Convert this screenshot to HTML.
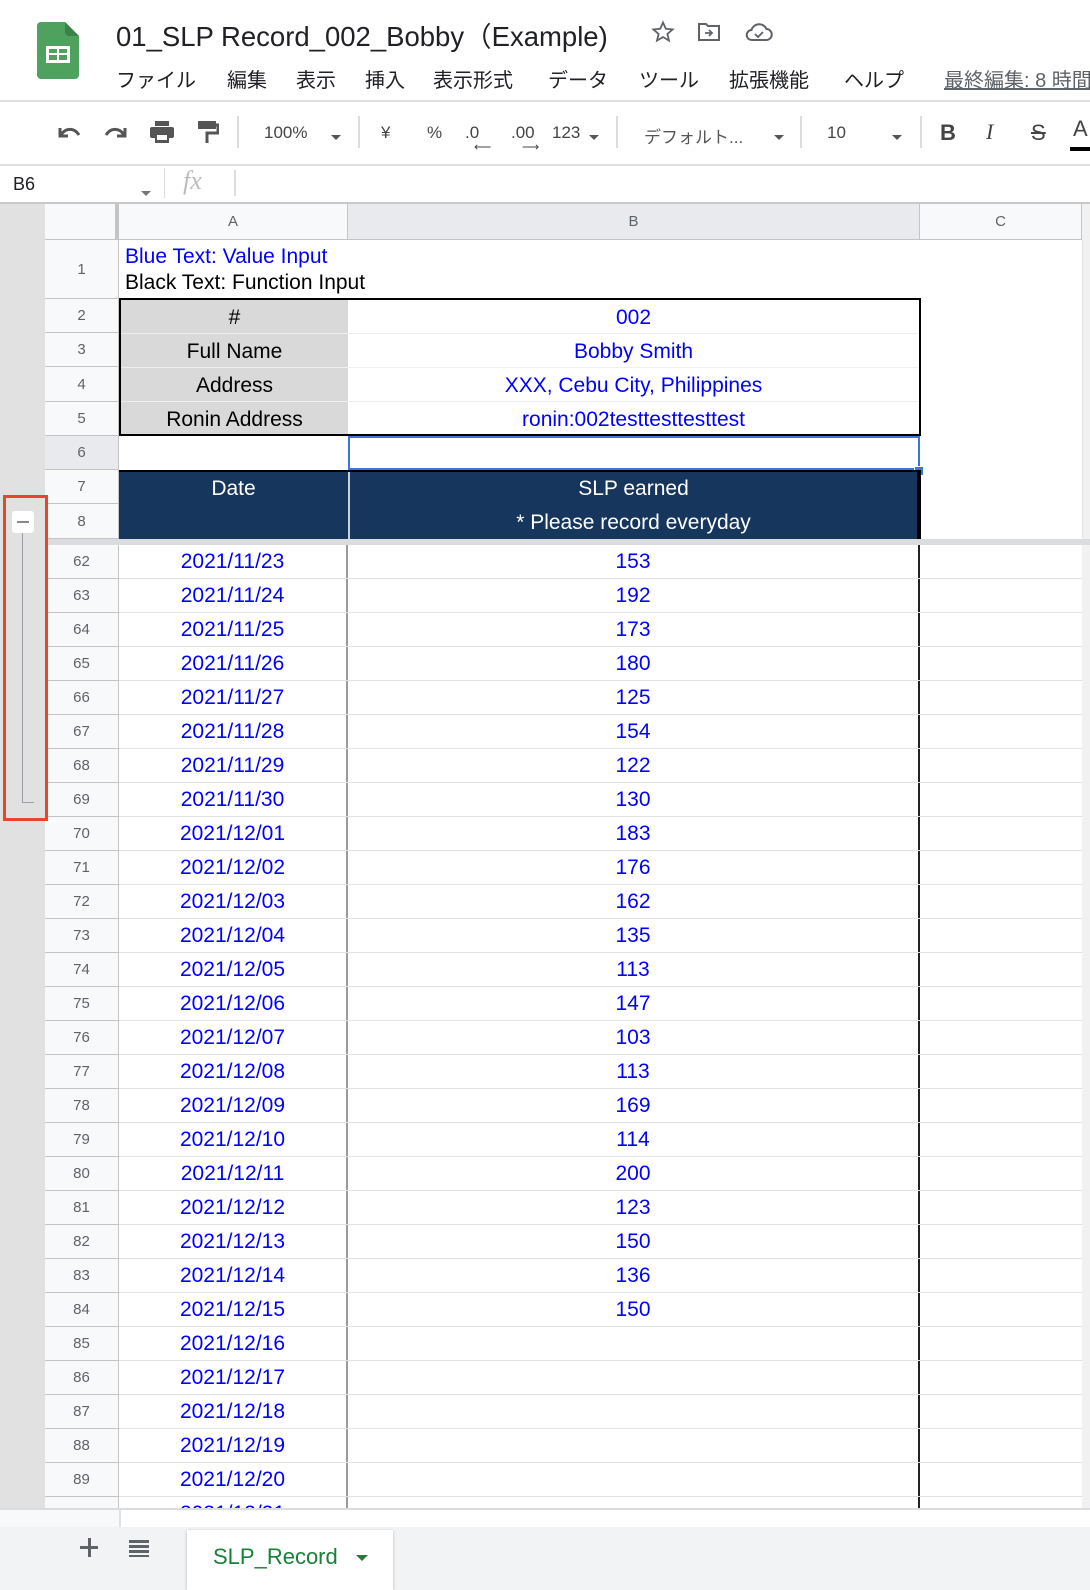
<!DOCTYPE html>
<html><head><meta charset="utf-8">
<style>
*{margin:0;padding:0;box-sizing:border-box}
body{width:1090px;height:1590px;position:relative;overflow:hidden;background:#fff;font-family:"Liberation Sans","Noto Sans CJK JP",sans-serif}
.abs{position:absolute}
.menu span{position:absolute;top:64px;font-size:20px;color:#202124;white-space:nowrap}
.tb{position:absolute;top:123px;font-size:17px;color:#444;white-space:nowrap}
.sep{position:absolute;top:116px;width:2px;height:32px;background:#dadce0}
.rn{position:absolute;left:45px;width:74px;text-align:center;font-size:15px;color:#5f6368;background:#f8f9fa;border-bottom:1px solid #c4c4c4;border-right:1px solid #c4c4c4}
.r{position:absolute;left:119px;width:801px;height:34px;border-bottom:1px solid #e2e2e2}
.r .a{position:absolute;left:0;width:229px;height:33px;line-height:34px;text-align:center;color:#0000ff;font-size:21px;border-right:2px solid #9a9a9a}
.r .b{position:absolute;left:229px;width:572px;height:33px;line-height:34px;text-align:center;color:#0000ff;font-size:21px;border-right:2px solid #222}
.tri{display:inline-block;width:0;height:0;border-left:5px solid transparent;border-right:5px solid transparent;border-top:5px solid #555}
.hc{position:absolute;text-align:center;font-size:21px;height:33px;line-height:33px}
</style></head><body>
<svg class="abs" style="left:37px;top:22px" width="42" height="57" viewBox="0 0 42 57"><path d="M4 0h24l14 14v39a4 4 0 0 1-4 4H4a4 4 0 0 1-4-4V4a4 4 0 0 1 4-4z" fill="#4ea25e"/><path d="M28 0l14 14H32a4 4 0 0 1-4-4z" fill="#3b8249"/><rect x="9" y="24" width="24" height="17" fill="#fff"/><rect x="12" y="27" width="8" height="4" fill="#4ea25e"/><rect x="22" y="27" width="8" height="4" fill="#4ea25e"/><rect x="12" y="33" width="8" height="5" fill="#4ea25e"/><rect x="22" y="33" width="8" height="5" fill="#4ea25e"/></svg>
<div class="abs" style="left:116px;top:14px;font-size:27.5px;color:#202124;white-space:nowrap">01_SLP Record_002_Bobby（Example)</div>
<svg class="abs" style="left:651px;top:20px" width="24" height="24" viewBox="0 0 24 24"><path d="M12 2.5l2.8 6.3 6.8.6-5.2 4.5 1.6 6.7L12 17l-6 3.6 1.6-6.7-5.2-4.5 6.8-.6z" fill="none" stroke="#5f6368" stroke-width="1.8"/></svg>
<svg class="abs" style="left:697px;top:21px" width="24" height="22" viewBox="0 0 24 22"><path d="M2 3h7l2 2h11v14H2z" fill="none" stroke="#5f6368" stroke-width="2"/><path d="M8 12h7M12 9l3 3-3 3" fill="none" stroke="#5f6368" stroke-width="1.8"/></svg>
<svg class="abs" style="left:745px;top:22px" width="28" height="20" viewBox="0 0 28 20"><path d="M7 18a5 5 0 0 1-.5-10A8 8 0 0 1 21.5 7a5.5 5.5 0 0 1-.5 11z" fill="none" stroke="#5f6368" stroke-width="2"/><path d="M10 12l3 3 5-5" fill="none" stroke="#5f6368" stroke-width="1.8"/></svg>
<div class="menu">
<span style="left:116px">ファイル</span><span style="left:227px">編集</span><span style="left:296px">表示</span><span style="left:365px">挿入</span><span style="left:433px">表示形式</span><span style="left:548px">データ</span><span style="left:639px">ツール</span><span style="left:729px">拡張機能</span><span style="left:844px">ヘルプ</span><span style="left:944px;color:#5f6368;text-decoration:underline">最終編集: 8 時間前</span>
</div>
<div class="abs" style="left:0;top:100px;width:1090px;height:2px;background:#e0e0e0"></div>
<svg class="abs" style="left:56px;top:124px" width="26" height="16" viewBox="0 0 26 16"><path d="M4 4v8h8" fill="none" stroke="#555" stroke-width="3"/><path d="M5 11C9 4 18 3 23 11" fill="none" stroke="#555" stroke-width="3"/></svg>
<svg class="abs" style="left:103px;top:124px" width="26" height="16" viewBox="0 0 26 16"><path d="M22 4v8h-8" fill="none" stroke="#555" stroke-width="3"/><path d="M21 11C17 4 8 3 3 11" fill="none" stroke="#555" stroke-width="3"/></svg>
<svg class="abs" style="left:149px;top:120px" width="26" height="24" viewBox="0 0 26 24"><rect x="6" y="1" width="14" height="5" fill="#555"/><rect x="1" y="7" width="24" height="11" rx="2" fill="#555"/><rect x="6" y="14" width="14" height="9" fill="#555"/><rect x="8" y="15" width="10" height="5" fill="#fff"/></svg>
<svg class="abs" style="left:197px;top:120px" width="22" height="24" viewBox="0 0 22 24"><rect x="1" y="1" width="18" height="8" fill="#555"/><path d="M19 5h2v8H10v10" fill="none" stroke="#555" stroke-width="3"/></svg>
<div class="sep" style="left:237px"></div>
<div class="tb" style="left:264px">100%</div><div class="abs" style="left:331px;top:127px"><span class="tri"></span></div>
<div class="sep" style="left:358px"></div>
<div class="tb" style="left:381px">¥</div><div class="tb" style="left:427px">%</div>
<div class="tb" style="left:465px">.0</div><div class="abs" style="left:474px;top:140px;font-size:12px;color:#444">⟵</div>
<div class="tb" style="left:511px">.00</div><div class="abs" style="left:522px;top:140px;font-size:12px;color:#444">⟶</div>
<div class="tb" style="left:552px">123</div><div class="abs" style="left:589px;top:127px"><span class="tri"></span></div>
<div class="sep" style="left:616px"></div>
<div class="tb" style="left:644px;color:#555">デフォルト...</div><div class="abs" style="left:774px;top:127px"><span class="tri"></span></div>
<div class="sep" style="left:800px"></div>
<div class="tb" style="left:827px">10</div><div class="abs" style="left:892px;top:127px"><span class="tri"></span></div>
<div class="sep" style="left:920px"></div>
<div class="tb" style="left:940px;font-size:22px;font-weight:bold;top:120px">B</div>
<div class="tb" style="left:986px;font-size:22px;font-style:italic;font-family:'Liberation Serif',serif;top:119px">I</div>
<div class="tb" style="left:1031px;font-size:22px;text-decoration:line-through;top:120px">S</div>
<div class="tb" style="left:1073px;font-size:22px;top:116px">A</div><div class="abs" style="left:1070px;top:147px;width:20px;height:4px;background:#000"></div>
<div class="abs" style="left:0;top:164px;width:1090px;height:2px;background:#e0e0e0"></div>
<div class="abs" style="left:13px;top:174px;font-size:18px;color:#202124">B6</div>
<div class="abs" style="left:141px;top:183px"><span class="tri" style="border-top-color:#777"></span></div>
<div class="abs" style="left:164px;top:168px;width:1px;height:30px;background:#dadce0"></div>
<div class="abs" style="left:183px;top:166px;font-size:26px;font-style:italic;color:#bbb;font-family:'Liberation Serif',serif">fx</div>
<div class="abs" style="left:234px;top:170px;width:2px;height:26px;background:#dadce0"></div>
<div class="abs" style="left:0;top:202px;width:1090px;height:2px;background:#c9c9c9"></div>
<div class="abs" style="left:0;top:204px;width:45px;height:1304px;background:#e1e1e1"></div>
<div class="abs" style="left:1082px;top:204px;width:8px;height:1304px;background:#f1f1f1"></div>
<div class="abs" style="left:45px;top:204px;width:74px;height:36px;background:#f8f9fa;border-right:4px solid #c4c4c4;border-bottom:1px solid #c4c4c4"></div>
<div class="abs" style="left:119px;top:204px;width:229px;height:36px;background:#f8f9fa;border-right:1px solid #c4c4c4;border-bottom:1px solid #c4c4c4;text-align:center;line-height:36px;font-size:15px;color:#5f6368">A</div>
<div class="abs" style="left:348px;top:204px;width:572px;height:36px;background:#e8eaed;border-right:1px solid #c4c4c4;border-bottom:1px solid #c4c4c4;text-align:center;line-height:36px;font-size:15px;color:#5f6368">B</div>
<div class="abs" style="left:920px;top:204px;width:162px;height:36px;background:#f8f9fa;border-right:1px solid #c4c4c4;border-bottom:1px solid #c4c4c4;text-align:center;line-height:36px;font-size:15px;color:#5f6368">C</div>
<div class="rn" style="top:240px;height:59px;line-height:59px">1</div>
<div class="rn" style="top:299px;height:34px;line-height:34px">2</div>
<div class="rn" style="top:333px;height:34px;line-height:34px">3</div>
<div class="rn" style="top:367px;height:35px;line-height:35px">4</div>
<div class="rn" style="top:402px;height:34px;line-height:34px">5</div>
<div class="rn" style="top:436px;height:34px;line-height:34px;background:#e8eaed">6</div>
<div class="rn" style="top:470px;height:34px;line-height:34px">7</div>
<div class="rn" style="top:504px;height:35px;line-height:35px">8</div>
<div class="abs" style="left:125px;top:245px;font-size:21px;color:#0000ff;white-space:nowrap">Blue Text: Value Input</div>
<div class="abs" style="left:125px;top:271px;font-size:21px;color:#000;white-space:nowrap">Black Text: Function Input</div>
<div class="abs" style="left:1082px;top:240px;width:1px;height:298px;background:#e2e2e2"></div>
<div class="abs" style="left:119px;top:298px;width:802px;height:138px;border:2px solid #000;background:#fff"></div>
<div class="abs" style="left:121px;top:300px;width:227px;height:134px;background:#d9d9d9"></div>
<div class="abs" style="left:121px;top:333px;width:797px;height:1px;background:#efefef"></div>
<div class="abs" style="left:121px;top:367px;width:797px;height:1px;background:#efefef"></div>
<div class="abs" style="left:121px;top:401px;width:797px;height:1px;background:#efefef"></div>
<div class="hc" style="left:121px;top:301px;width:227px;color:#000">#</div>
<div class="hc" style="left:121px;top:335px;width:227px;color:#000">Full Name</div>
<div class="hc" style="left:121px;top:369px;width:227px;color:#000">Address</div>
<div class="hc" style="left:121px;top:403px;width:227px;color:#000">Ronin Address</div>
<div class="hc" style="left:348px;top:301px;width:571px;color:#0000ff">002</div>
<div class="hc" style="left:348px;top:335px;width:571px;color:#0000ff">Bobby Smith</div>
<div class="hc" style="left:348px;top:369px;width:571px;color:#0000ff">XXX, Cebu City, Philippines</div>
<div class="hc" style="left:348px;top:403px;width:571px;color:#0000ff">ronin:002testtesttesttest</div>
<div class="abs" style="left:348px;top:436px;width:572px;height:34px;border:2px solid #3a76e0"></div>
<div class="abs" style="left:914px;top:466px;width:10px;height:10px;background:#3a76e0;border:1px solid #fff"></div>
<div class="abs" style="left:119px;top:470px;width:802px;height:69px;background:#17365d;border-top:2px solid #000"></div>
<div class="abs" style="left:348px;top:472px;width:2px;height:67px;background:#c8d0dc"></div>
<div class="abs" style="left:917px;top:470px;width:4px;height:69px;background:#000"></div>
<div class="abs" style="left:119px;top:477px;width:229px;text-align:center;font-size:21px;color:#fff">Date</div>
<div class="abs" style="left:350px;top:477px;width:567px;text-align:center;font-size:21px;color:#fff">SLP earned</div>
<div class="abs" style="left:350px;top:511px;width:567px;text-align:center;font-size:21px;color:#fff">* Please record everyday</div>
<div class="abs" style="left:45px;top:539px;width:1045px;height:6px;background:#dadce0"></div>
<div class="rn" style="top:545px;height:34px;line-height:34px">62</div><div class="r" style="top:545px"><span class="a">2021/11/23</span><span class="b">153</span></div>
<div class="rn" style="top:579px;height:34px;line-height:34px">63</div><div class="r" style="top:579px"><span class="a">2021/11/24</span><span class="b">192</span></div>
<div class="rn" style="top:613px;height:34px;line-height:34px">64</div><div class="r" style="top:613px"><span class="a">2021/11/25</span><span class="b">173</span></div>
<div class="rn" style="top:647px;height:34px;line-height:34px">65</div><div class="r" style="top:647px"><span class="a">2021/11/26</span><span class="b">180</span></div>
<div class="rn" style="top:681px;height:34px;line-height:34px">66</div><div class="r" style="top:681px"><span class="a">2021/11/27</span><span class="b">125</span></div>
<div class="rn" style="top:715px;height:34px;line-height:34px">67</div><div class="r" style="top:715px"><span class="a">2021/11/28</span><span class="b">154</span></div>
<div class="rn" style="top:749px;height:34px;line-height:34px">68</div><div class="r" style="top:749px"><span class="a">2021/11/29</span><span class="b">122</span></div>
<div class="rn" style="top:783px;height:34px;line-height:34px">69</div><div class="r" style="top:783px"><span class="a">2021/11/30</span><span class="b">130</span></div>
<div class="rn" style="top:817px;height:34px;line-height:34px">70</div><div class="r" style="top:817px"><span class="a">2021/12/01</span><span class="b">183</span></div>
<div class="rn" style="top:851px;height:34px;line-height:34px">71</div><div class="r" style="top:851px"><span class="a">2021/12/02</span><span class="b">176</span></div>
<div class="rn" style="top:885px;height:34px;line-height:34px">72</div><div class="r" style="top:885px"><span class="a">2021/12/03</span><span class="b">162</span></div>
<div class="rn" style="top:919px;height:34px;line-height:34px">73</div><div class="r" style="top:919px"><span class="a">2021/12/04</span><span class="b">135</span></div>
<div class="rn" style="top:953px;height:34px;line-height:34px">74</div><div class="r" style="top:953px"><span class="a">2021/12/05</span><span class="b">113</span></div>
<div class="rn" style="top:987px;height:34px;line-height:34px">75</div><div class="r" style="top:987px"><span class="a">2021/12/06</span><span class="b">147</span></div>
<div class="rn" style="top:1021px;height:34px;line-height:34px">76</div><div class="r" style="top:1021px"><span class="a">2021/12/07</span><span class="b">103</span></div>
<div class="rn" style="top:1055px;height:34px;line-height:34px">77</div><div class="r" style="top:1055px"><span class="a">2021/12/08</span><span class="b">113</span></div>
<div class="rn" style="top:1089px;height:34px;line-height:34px">78</div><div class="r" style="top:1089px"><span class="a">2021/12/09</span><span class="b">169</span></div>
<div class="rn" style="top:1123px;height:34px;line-height:34px">79</div><div class="r" style="top:1123px"><span class="a">2021/12/10</span><span class="b">114</span></div>
<div class="rn" style="top:1157px;height:34px;line-height:34px">80</div><div class="r" style="top:1157px"><span class="a">2021/12/11</span><span class="b">200</span></div>
<div class="rn" style="top:1191px;height:34px;line-height:34px">81</div><div class="r" style="top:1191px"><span class="a">2021/12/12</span><span class="b">123</span></div>
<div class="rn" style="top:1225px;height:34px;line-height:34px">82</div><div class="r" style="top:1225px"><span class="a">2021/12/13</span><span class="b">150</span></div>
<div class="rn" style="top:1259px;height:34px;line-height:34px">83</div><div class="r" style="top:1259px"><span class="a">2021/12/14</span><span class="b">136</span></div>
<div class="rn" style="top:1293px;height:34px;line-height:34px">84</div><div class="r" style="top:1293px"><span class="a">2021/12/15</span><span class="b">150</span></div>
<div class="rn" style="top:1327px;height:34px;line-height:34px">85</div><div class="r" style="top:1327px"><span class="a">2021/12/16</span><span class="b"></span></div>
<div class="rn" style="top:1361px;height:34px;line-height:34px">86</div><div class="r" style="top:1361px"><span class="a">2021/12/17</span><span class="b"></span></div>
<div class="rn" style="top:1395px;height:34px;line-height:34px">87</div><div class="r" style="top:1395px"><span class="a">2021/12/18</span><span class="b"></span></div>
<div class="rn" style="top:1429px;height:34px;line-height:34px">88</div><div class="r" style="top:1429px"><span class="a">2021/12/19</span><span class="b"></span></div>
<div class="rn" style="top:1463px;height:34px;line-height:34px">89</div><div class="r" style="top:1463px"><span class="a">2021/12/20</span><span class="b"></span></div>
<div class="rn" style="top:1497px;height:34px;line-height:34px">90</div><div class="r" style="top:1497px"><span class="a">2021/12/21</span><span class="b"></span></div>
<div class="abs" style="left:920px;top:545px;width:162px;height:963px;background:repeating-linear-gradient(to bottom,transparent 0,transparent 33px,#e2e2e2 33px,#e2e2e2 34px)"></div>
<div class="abs" style="left:22px;top:531px;width:1px;height:272px;background:#9aa0a6"></div>
<div class="abs" style="left:22px;top:802px;width:12px;height:1px;background:#9aa0a6"></div>
<div class="abs" style="left:12px;top:511px;width:22px;height:22px;background:#fff;border-radius:3px"></div>
<div class="abs" style="left:17px;top:521px;width:12px;height:2px;background:#888"></div>
<div class="abs" style="left:3px;top:495px;width:45px;height:326px;border:3px solid #e8442e"></div>
<div class="abs" style="left:0;top:1508px;width:1090px;height:82px;background:#f1f3f4;border-top:2px solid #dadce0"></div>
<div class="abs" style="left:0;top:1510px;width:119px;height:17px;background:#f8f9fa"></div>
<div class="abs" style="left:119px;top:1510px;width:971px;height:17px;background:#fff;border-left:2px solid #e0e0e0"></div>
<div class="abs" style="left:80px;top:1546px;width:18px;height:3px;background:#5f6368"></div>
<div class="abs" style="left:88px;top:1538px;width:3px;height:19px;background:#5f6368"></div>
<div class="abs" style="left:129px;top:1540px;width:20px;height:3px;background:#5f6368"></div>
<div class="abs" style="left:129px;top:1545px;width:20px;height:3px;background:#5f6368"></div>
<div class="abs" style="left:129px;top:1550px;width:20px;height:3px;background:#5f6368"></div>
<div class="abs" style="left:129px;top:1555px;width:20px;height:2px;background:#5f6368"></div>
<div class="abs" style="left:187px;top:1530px;width:206px;height:60px;background:#fff;box-shadow:0 1px 3px rgba(0,0,0,.25)"></div>
<div class="abs" style="left:213px;top:1544px;font-size:22px;color:#188038;font-weight:500">SLP_Record</div>
<div class="abs" style="left:356px;top:1555px;width:0;height:0;border-left:6px solid transparent;border-right:6px solid transparent;border-top:6px solid #188038"></div>
</body></html>
